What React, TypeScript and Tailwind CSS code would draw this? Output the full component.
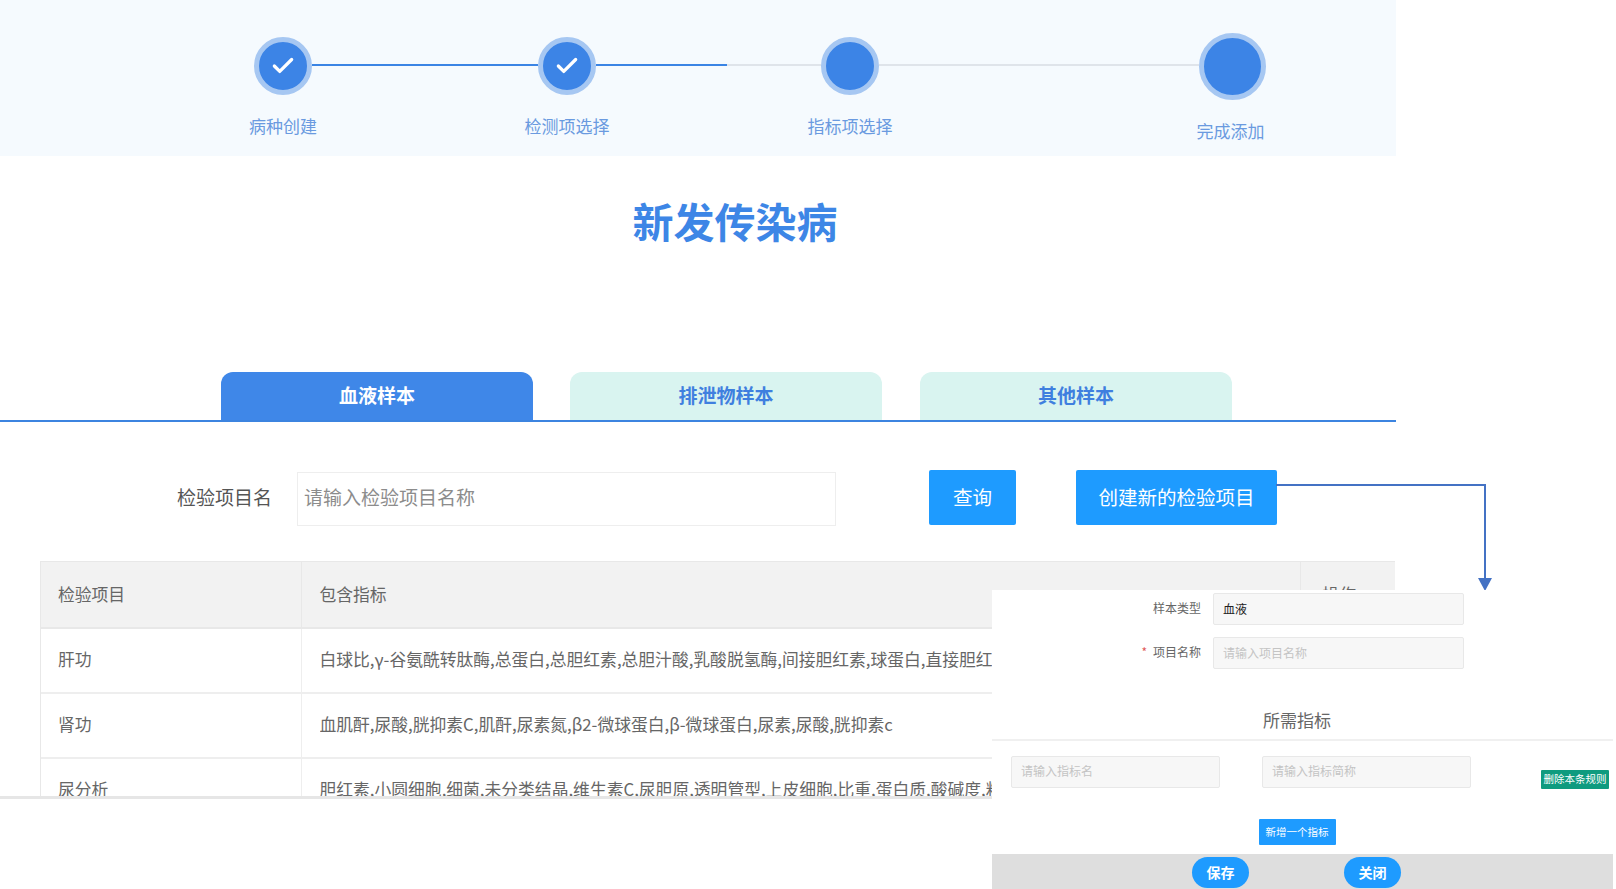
import { Check } from "lucide-react";

const steps = [
  { label: "病种创建", done: true },
  { label: "检测项选择", done: true },
  { label: "指标项选择", done: false },
];

const rows = [
  {
    name: "肝功",
    items: "白球比,γ-谷氨酰转肽酶,总蛋白,总胆红素,总胆汁酸,乳酸脱氢酶,间接胆红素,球蛋白,直接胆红素,谷丙转氨酶,谷草转氨酶",
    height: "h-[65px]",
  },
  {
    name: "肾功",
    items: "血肌酐,尿酸,胱抑素C,肌酐,尿素氮,β2-微球蛋白,β-微球蛋白,尿素,尿酸,胱抑素c",
    height: "h-[65px]",
  },
  {
    name: "尿分析",
    items: "胆红素,小圆细胞,细菌,未分类结晶,维生素C,尿胆原,透明管型,上皮细胞,比重,蛋白质,酸碱度,粘液丝,葡萄糖,酮体",
    height: "h-[65px]",
  },
];

const Step = ({ label, done }: { label: string; done: boolean }) => (
  <div className="flex w-[58px] flex-col items-center">
    <div className="flex h-[66px] items-center">
      <div className="flex h-[58px] w-[58px] items-center justify-center rounded-full border-[5px] border-[#a6c7f2] bg-[#3c84e6] text-white">
        {done && <Check size={26} strokeWidth={3} strokeLinecap="round" strokeLinejoin="round" />}
      </div>
    </div>
    <span className="mt-[15px] text-[17px] leading-[24px] whitespace-nowrap text-[#6a9ae0]">{label}</span>
  </div>
);

const App = () => {
  const inputCls =
    "rounded-[2px] border border-[#e8e8e8] bg-[#f7f7f7] px-[9px] text-[12px] text-[#222] outline-none placeholder:text-[#c4c4c4]";

  return (
    <div className="relative h-[889px] w-[1616px] overflow-hidden bg-white font-['Noto_Sans_CJK_SC',sans-serif] text-[#666]">
      {/* stepper */}
      <div className="flex h-[156px] w-[1396px] items-start bg-[#f5fafe] pt-[33px] pl-[254px]">
        <Step {...steps[0]} />
        <div className="mt-[31px] h-[2px] w-[226px] bg-[#3a84e4]" />
        <Step {...steps[1]} />
        <div className="mt-[31px] h-[2px] w-[131px] bg-[#3a84e4]" />
        <div className="mt-[31px] h-[2px] w-[94px] bg-[#dfe4ea]" />
        <Step {...steps[2]} />
        <div className="mt-[31px] h-[2px] w-[320px] bg-[#dfe4ea]" />
        <div className="flex w-[67px] flex-col items-center">
          <div className="h-[67px] w-[67px] rounded-full border-[5px] border-[#a6c7f2] bg-[#3c84e6]" />
          <span className="mt-[19px] mr-[4px] text-[17px] leading-[24px] whitespace-nowrap text-[#6a9ae0]">完成添加</span>
        </div>
      </div>

      {/* title */}
      <div className="h-[216px] w-[1470px] pt-[36px] text-center text-[41px] leading-[56px] font-bold text-[#3d86e6]">
        新发传染病
      </div>

      {/* tabs */}
      <div className="flex w-[1396px] gap-[37px] border-b-2 border-[#3c84e0] pl-[221px]">
        <div className="flex h-[48px] w-[312px] items-center justify-center rounded-t-[12px] bg-[#3f87e8] pb-[2px] text-[19px] font-bold text-white">
          血液样本
        </div>
        <div className="flex h-[48px] w-[312px] items-center justify-center rounded-t-[12px] bg-[#d9f4f0] pb-[2px] text-[19px] font-bold text-[#3f7fdf]">
          排泄物样本
        </div>
        <div className="ml-[1px] flex h-[48px] w-[312px] items-center justify-center rounded-t-[12px] bg-[#d9f4f0] pb-[2px] text-[19px] font-bold text-[#3f7fdf]">
          其他样本
        </div>
      </div>

      {/* search */}
      <div className="mt-[48px] flex h-[56px] items-start">
        <label className="flex h-[54px] w-[272px] items-center justify-end text-[19px] text-[#555]">检验项目名</label>
        <input
          placeholder="请输入检验项目名称"
          className="mt-[2px] ml-[25px] h-[54px] w-[539px] border border-[#eeeeee] px-[6px] pb-[5px] text-[19px] outline-none placeholder:text-[#8c8c8c]"
        />
        <button className="ml-[93px] h-[55px] w-[87px] rounded-[2px] bg-[#1e9bff] pb-[2px] text-[19.5px] text-white">查询</button>
        <button className="ml-[60px] h-[55px] w-[201px] rounded-[2px] bg-[#1e9bff] pb-[2px] text-[19.5px] text-white">
          创建新的检验项目
        </button>
      </div>

      {/* table */}
      <div className="mt-[35px] ml-[40px] h-[235px] w-[1355px] overflow-hidden border-t border-l border-[#e8e8e8]">
        <table className="w-full table-fixed border-collapse text-[16.8px]">
          <colgroup>
            <col className="w-[260px]" />
            <col />
            <col className="w-[95px]" />
          </colgroup>
          <thead>
            <tr className="h-[66px] bg-[#f2f2f2]">
              <th className="border-r border-b-2 border-[#e8e8e8] pl-[17px] text-left font-normal">检验项目</th>
              <th className="border-r border-b-2 border-[#e8e8e8] pl-[18px] text-left font-normal">包含指标</th>
              <th className="border-b-2 border-[#e8e8e8] pl-[22px] text-left font-normal">操作</th>
            </tr>
          </thead>
          <tbody>
            {rows.map((row) => (
              <tr key={row.name} className={row.height}>
                <td className="border-r border-b-2 border-[#eeeeee] pb-[2px] pl-[17px]">{row.name}</td>
                <td colSpan={2} className="border-b-2 border-[#eeeeee] pb-[2px] pl-[18px]">
                  {/* the dialog starts at x=992, no need to run under it */}
                  <div className="w-[673px] overflow-hidden whitespace-nowrap">{row.items}</div>
                </td>
              </tr>
            ))}
          </tbody>
        </table>
      </div>
      <div className="h-[3px] w-[1396px] bg-[#e6e6e6]" />

      {/* connector */}
      <svg className="absolute top-[481px] left-[1276px]" width="220" height="112" viewBox="0 0 220 112" fill="none">
        <path d="M0 4H209V98" stroke="#4472c4" strokeWidth="2" />
        <path d="M202 97H216L209 110Z" fill="#4472c4" />
      </svg>

      {/* create dialog */}
      <div className="absolute top-[590px] left-[992px] h-[299px] w-[624px] bg-white pt-[3px]">
        <div className="flex items-center gap-[12px]">
          <span className="w-[209px] pb-[2px] text-right text-[12px] text-[#666]">样本类型</span>
          <input readOnly value="血液" className={`h-[32px] w-[251px] pb-[2px] ${inputCls}`} />
        </div>
        <div className="mt-[12px] flex items-center gap-[12px]">
          <span className="w-[209px] pb-[2px] text-right text-[12px] text-[#666]">
            <span className="mr-[6px] text-[#e05a5a]">*</span>项目名称
          </span>
          <input placeholder="请输入项目名称" className={`h-[32px] w-[251px] pb-[2px] ${inputCls}`} />
        </div>
        <div className="mt-[38px] w-[610px] text-center text-[17px] leading-[26px] text-[#666]">所需指标</div>
        <div className="mt-[6px] h-[2px] w-[621px] bg-[#f0f0f0]" />
        <div className="mt-[15px] flex items-start pl-[19px]">
          <input placeholder="请输入指标名" className={`h-[32px] w-[209px] pb-[4px] ${inputCls}`} />
          <input placeholder="请输入指标简称" className={`ml-[42px] h-[32px] w-[209px] pb-[4px] ${inputCls}`} />
          <button className="mt-[14px] ml-[70px] h-[19px] w-[68px] rounded-[1px] bg-[#0f9b7f] text-[10.5px] leading-none whitespace-nowrap text-white">
            删除本条规则
          </button>
        </div>
        <div className="mt-[30px] flex w-[610px] justify-center">
          <button className="h-[26px] w-[77px] rounded-[1px] bg-[#1e9bff] text-[10.5px] leading-none text-white">
            新增一个指标
          </button>
        </div>
        <div className="mt-[9px] flex h-[37px] w-[621px] items-center gap-[95px] bg-[#dedede] pl-[200px]">
          <button className="h-[31px] w-[57px] rounded-full bg-[#1e9bff] text-[14px] font-bold text-white">保存</button>
          <button className="h-[31px] w-[57px] rounded-full bg-[#1e9bff] text-[14px] font-bold text-white">关闭</button>
        </div>
      </div>
    </div>
  );
};

export default App;
